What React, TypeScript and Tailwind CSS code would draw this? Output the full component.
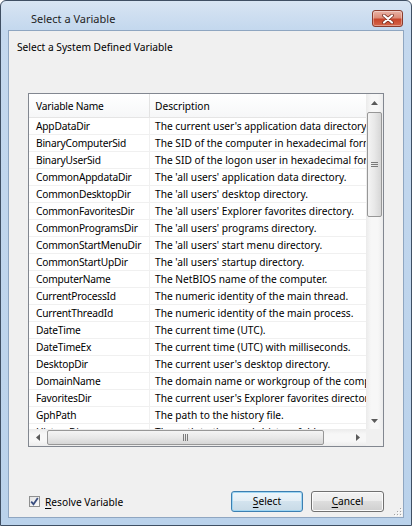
import React from "react";

const rows: [string, string][] = [
  ["AppDataDir", "The current user's application data directory."],
  ["BinaryComputerSid", "The SID of the computer in hexadecimal format."],
  ["BinaryUserSid", "The SID of the logon user in hexadecimal format."],
  ["CommonAppdataDir", "The 'all users' application data directory."],
  ["CommonDesktopDir", "The 'all users' desktop directory."],
  ["CommonFavoritesDir", "The 'all users' Explorer favorites directory."],
  ["CommonProgramsDir", "The 'all users' programs directory."],
  ["CommonStartMenuDir", "The 'all users' start menu directory."],
  ["CommonStartUpDir", "The 'all users' startup directory."],
  ["ComputerName", "The NetBIOS name of the computer."],
  ["CurrentProcessId", "The numeric identity of the main thread."],
  ["CurrentThreadId", "The numeric identity of the main process."],
  ["DateTime", "The current time (UTC)."],
  ["DateTimeEx", "The current time (UTC) with milliseconds."],
  ["DesktopDir", "The current user's desktop directory."],
  ["DomainName", "The domain name or workgroup of the computer."],
  ["FavoritesDir", "The current user's Explorer favorites directory."],
  ["GphPath", "The path to the history file."],
  ["HistoryDir", "The path to the user's history folder."],
];

function Arrow({ dir }: { dir: "up" | "down" | "left" | "right" }) {
  const pts =
    dir === "up"
      ? "0,4 3.5,0 7,4"
      : dir === "down"
      ? "0,0 3.5,4 7,0"
      : dir === "left"
      ? "4,0 0,3.5 4,7"
      : "0,0 4,3.5 0,7";
  const w = dir === "up" || dir === "down" ? 7 : 4;
  const h = dir === "up" || dir === "down" ? 4 : 7;
  return (
    <svg width={w} height={h} viewBox={`0 0 ${w} ${h}`}>
      <polygon points={pts} fill="#5a5a5a" />
    </svg>
  );
}

export default function App() {
  return (
    <div className="w-[412px] h-[526px] font-['Noto_Sans',sans-serif] text-black">
      <div className="w-[412px] h-[526px] rounded-t-[6px] border border-[#3f4f63] bg-[linear-gradient(180deg,#d8e5f3_0px,#c4d8ee_28px,#bad2eb_100%)] flex flex-col">
        {/* Title bar */}
        <div className="h-[29px] pt-[6px] pl-[30px] pr-[8px] flex items-center justify-between">
          <span className="text-[11px] leading-[14px] text-[#1e1e1e]">Select a Variable</span>
          <div className="w-[31px] h-[17px] rounded-[3px] border border-[#8a3b2d] bg-[linear-gradient(180deg,#eab3a6_0%,#dd8c78_45%,#c8452b_55%,#d5664a_100%)] shadow-[inset_0_0_0_1px_rgba(255,255,255,0.35)] flex items-center justify-center">
            <svg width="12" height="10" viewBox="0 0 12 10">
              <path d="M2 1.5 L10 8.5 M10 1.5 L2 8.5" stroke="#6b2418" strokeWidth="3.6" strokeLinecap="round" />
              <path d="M2 1.5 L10 8.5 M10 1.5 L2 8.5" stroke="#ffffff" strokeWidth="2.2" strokeLinecap="round" />
            </svg>
          </div>
        </div>

        {/* Client area */}
        <div className="relative mx-[7px] mb-[7px] flex-1 border border-[#8fa6c1] bg-[#f0f0f0] flex flex-col">
          <div className="ml-[8px] mt-[9px] text-[10.2px] leading-[14px]">Select a System Defined Variable</div>

          {/* List view */}
          <div className="mx-[19px] mt-[39px] h-[354px] border border-[#828790] bg-white flex flex-col">
            <div className="flex flex-1 min-h-0">
              <div className="flex-1 min-w-0 overflow-hidden text-[10.2px]">
                <div className="h-[24px] flex border-b border-[#e5e5e5] bg-[linear-gradient(180deg,#ffffff,#f6f7f8)]">
                  <div className="w-[121px] shrink-0 pl-[7px] pt-[3px] flex items-center border-r border-[#e3e3e3] tracking-[-0.2px]">Variable Name</div>
                  <div className="pl-[5px] pt-[3px] flex items-center whitespace-nowrap">Description</div>
                </div>
                {rows.map(([n, d]) => (
                  <div key={n} className="h-[17px] flex border-b border-[#f0f0f0]">
                    <div className="w-[121px] shrink-0 pl-[7px] pt-[2px] flex items-center border-r border-[#f0f0f0] whitespace-nowrap overflow-hidden tracking-[-0.2px]">{n}</div>
                    <div className="pl-[5px] pt-[2px] flex items-center whitespace-nowrap">{d}</div>
                  </div>
                ))}
              </div>
              {/* vertical scrollbar */}
              <div className="w-[17px] shrink-0 flex flex-col bg-[linear-gradient(90deg,#ebebeb,#f7f7f7_30%,#f7f7f7_70%,#ececec)]">
                <div className="h-[17px] flex items-center justify-center">
                  <Arrow dir="up" />
                </div>
                <div className="flex-1 px-[1px] pt-[1px]">
                  <div className="h-[105px] rounded-[2px] border border-[#979797] bg-[linear-gradient(90deg,#f4f4f4,#e8e8e8_50%,#d6d6d6)] flex items-center justify-center">
                    <svg width="7" height="7" viewBox="0 0 7 7">
                      <path d="M0 1.5H7M0 3.5H7M0 5.5H7" stroke="#7a7a7a" strokeWidth="1" />
                    </svg>
                  </div>
                </div>
                <div className="h-[17px] flex items-center justify-center">
                  <Arrow dir="down" />
                </div>
              </div>
            </div>
            {/* horizontal scrollbar */}
            <div className="h-[17px] flex">
              <div className="flex-1 flex bg-[linear-gradient(180deg,#ebebeb,#f7f7f7_30%,#f7f7f7_70%,#ececec)]">
                <div className="w-[17px] flex items-center justify-center">
                  <Arrow dir="left" />
                </div>
                <div className="flex-1 py-[1px] pl-[1px]">
                  <div className="w-[277px] h-full rounded-[2px] border border-[#979797] bg-[linear-gradient(180deg,#f4f4f4,#e8e8e8_50%,#d6d6d6)] flex items-center justify-center">
                    <svg width="7" height="7" viewBox="0 0 7 7">
                      <path d="M1.5 0V7M3.5 0V7M5.5 0V7" stroke="#7a7a7a" strokeWidth="1" />
                    </svg>
                  </div>
                </div>
                <div className="w-[17px] flex items-center justify-center">
                  <Arrow dir="right" />
                </div>
              </div>
              <div className="w-[17px] bg-[#f0f0f0]" />
            </div>
          </div>

          {/* Bottom row */}
          <div className="mx-[19px] mt-[44px] h-[21px] flex items-center text-[10.2px]">
            <div className="ml-[1px] w-[11px] h-[11px] border border-[#8e8f8f] bg-[linear-gradient(135deg,#e4e4e4,#fbfbfb)] flex items-center justify-center">
              <svg width="9" height="9" viewBox="0 0 9 9">
                <path d="M1.2 4.6 L3.5 7.2 L7.8 1" stroke="#3b4f80" strokeWidth="1.8" fill="none" />
              </svg>
            </div>
            <span className="ml-[5px] leading-[14px] pt-[1px]">
              <span className="underline underline-offset-2">R</span>esolve Variable
            </span>
            <div className="flex-1" />
            <div className="w-[72px] h-[21px] pt-[1px] rounded-[3px] border border-[#3c7fb1] shadow-[inset_0_0_0_1px_#9fd6f3] bg-[linear-gradient(180deg,#eef6fb_0%,#e3eef5_50%,#d3e3ee_50%,#c8dae6_100%)] flex items-center justify-center">
              <span><span className="underline underline-offset-2">S</span>elect</span>
            </div>
            <div className="ml-[8px] w-[73px] h-[21px] pt-[1px] rounded-[3px] border border-[#707070] shadow-[inset_0_0_0_1px_#fbfbfb] bg-[linear-gradient(180deg,#f2f2f2_0%,#ebebeb_50%,#dddddd_50%,#cfcfcf_100%)] flex items-center justify-center">
              <span><span className="underline underline-offset-2">C</span>ancel</span>
            </div>
          </div>

          {/* size grip */}
          <svg className="absolute right-[1px] bottom-[1px]" width="8" height="8" viewBox="0 0 8 8">
            {[
              [6, 0], [6, 3], [3, 3], [6, 6], [3, 6], [0, 6],
            ].map(([x, y], i) => (
              <g key={i}>
                <rect x={x + 1} y={y + 1} width="1" height="1" fill="#ffffff" />
                <rect x={x} y={y} width="1" height="1" fill="#a3a3a3" />
              </g>
            ))}
          </svg>
        </div>
      </div>
    </div>
  );
}
